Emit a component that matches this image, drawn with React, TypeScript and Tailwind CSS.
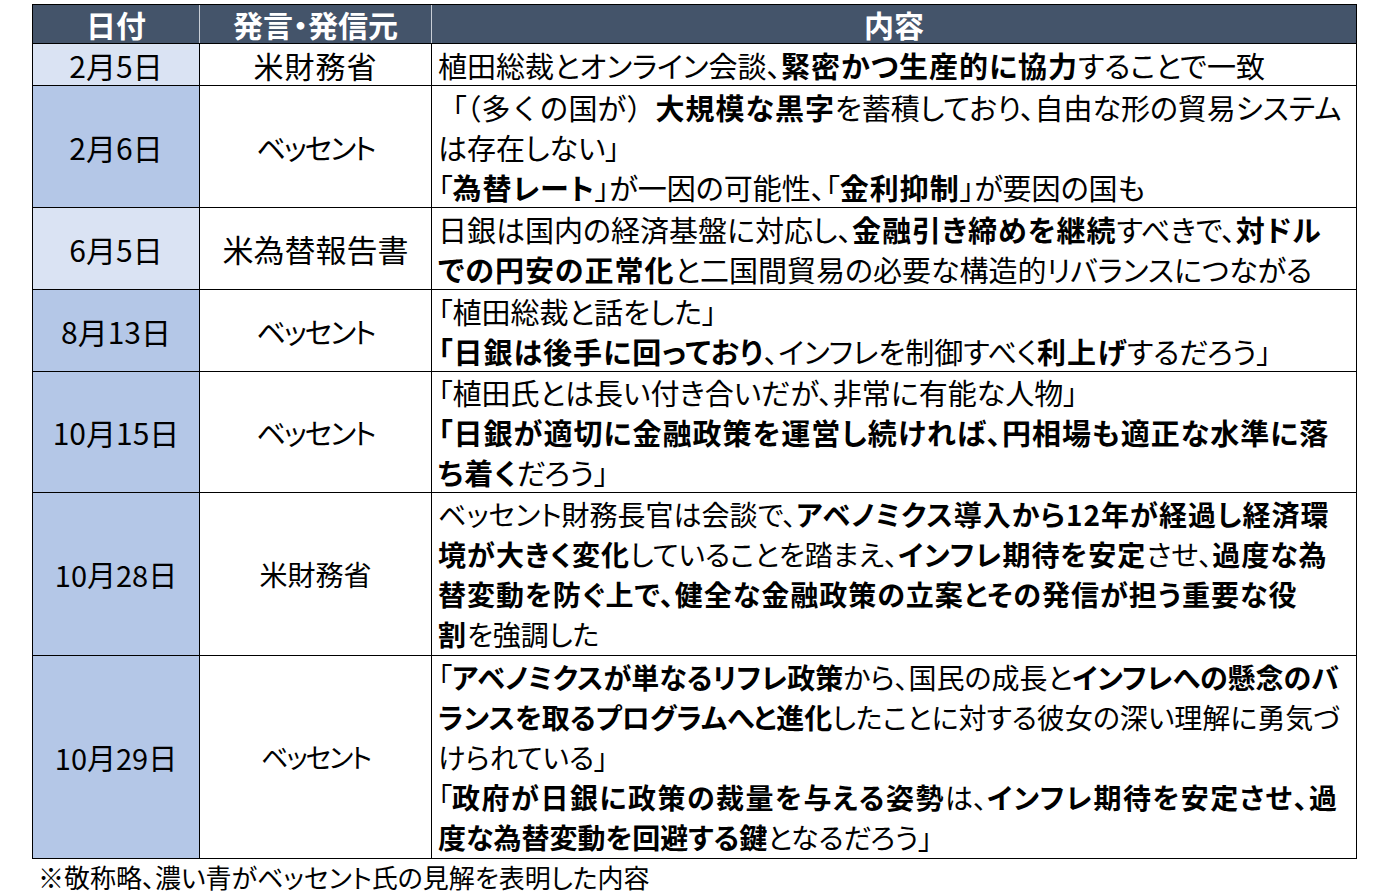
type Seg = [string, boolean?, string?];

type Row = {
  date: string;
  source: string;
  dark: boolean;
  h: string;
  dateCls: string;
  srcCls: string;
  textCls: string;
  boldCls: string;
  lines: Seg[][];
};

const rows: Row[] = [
  {
    date: "2月5日",
    source: "米財務省",
    dark: false,
    h: "h-[42px]",
    dateCls: "text-[30px]",
    srcCls: "text-[30px] tracking-[1px]",
    textCls: "text-[29px]",
    boldCls: "tracking-[1px]",
    lines: [[["植田総裁とオンライン会談、"], ["緊密かつ生産的に協力", true], ["することで一致"]]],
  },
  {
    date: "2月6日",
    source: "ベッセント",
    dark: true,
    h: "h-[122px]",
    dateCls: "text-[30px]",
    srcCls: "text-[29px] tracking-[-2px]",
    textCls: "text-[29px]",
    boldCls: "tracking-[1px]",
    lines: [
      [
        ["「（多くの国が）", false, "[font-feature-settings:normal]"],
        ["大規模な黒字", true],
        ["を蓄積しており、自由な形の貿易システム"],
      ],
      [["は存在しない」"]],
      [["「"], ["為替レート", true], ["」が一因の可能性、「"], ["金利抑制", true], ["」が要因の国も"]],
    ],
  },
  {
    date: "6月5日",
    source: "米為替報告書",
    dark: false,
    h: "h-[82px]",
    dateCls: "text-[30px]",
    srcCls: "text-[31px]",
    textCls: "text-[29px]",
    boldCls: "tracking-[1px]",
    lines: [
      [["日銀は国内の経済基盤に対応し、"], ["金融引き締めを継続", true], ["すべきで、"], ["対ドル", true]],
      [["での円安の正常化", true], ["と二国間貿易の必要な構造的リバランスにつながる"]],
    ],
  },
  {
    date: "8月13日",
    source: "ベッセント",
    dark: true,
    h: "h-[82px]",
    dateCls: "text-[30px]",
    srcCls: "text-[29px] tracking-[-2px]",
    textCls: "text-[29px]",
    boldCls: "tracking-[1px]",
    lines: [
      [["「植田総裁と話をした」"]],
      [["「日銀は後手に回っており", true], ["、インフレを制御すべく"], ["利上げ", true], ["するだろう」"]],
    ],
  },
  {
    date: "10月15日",
    source: "ベッセント",
    dark: true,
    h: "h-[121px]",
    dateCls: "text-[30px]",
    srcCls: "text-[29px] tracking-[-2px]",
    textCls: "text-[29px]",
    boldCls: "tracking-[1px]",
    lines: [
      [["「植田氏とは長い付き合いだが、非常に有能な人物」"]],
      [["「日銀が適切に金融政策を運営し続ければ、円相場も適正な水準に落", true]],
      [["ち着く", true], ["だろう」"]],
    ],
  },
  {
    date: "10月28日",
    source: "米財務省",
    dark: true,
    h: "h-[163px]",
    dateCls: "text-[29px]",
    srcCls: "text-[28px]",
    textCls: "text-[28px]",
    boldCls: "tracking-[1px]",
    lines: [
      [["ベッセント財務長官は会談で、"], ["アベノミクス導入から12年が経過し経済環", true]],
      [["境が大きく変化", true], ["していることを踏まえ、"], ["インフレ期待を安定", true], ["させ、"], ["過度な為", true]],
      [["替変動を防ぐ上で、健全な金融政策の立案とその発信が担う重要な役", true]],
      [["割", true], ["を強調した"]],
    ],
  },
  {
    date: "10月29日",
    source: "ベッセント",
    dark: true,
    h: "h-[202px]",
    dateCls: "text-[29px]",
    srcCls: "text-[27px] tracking-[-2px]",
    textCls: "text-[28px]",
    boldCls: "",
    lines: [
      [["「"], ["アベノミクスが単なるリフレ政策", true], ["から、国民の成長と"], ["インフレへの懸念のバ", true]],
      [["ランスを取るプログラムへと進化", true], ["したことに対する彼女の深い理解に勇気づ"]],
      [["けられている」"]],
      [
        ["「"],
        ["政府が日銀に政策の裁量を与える姿勢", true, "tracking-[1.5px]"],
        ["は、"],
        ["インフレ期待を安定させ、過", true, "tracking-[1.5px]"],
      ],
      [["度な為替変動を回避する鍵", true], ["となるだろう」"]],
    ],
  },
];

export default function App() {
  return (
    <div className="min-h-[895px] bg-white pl-[32px] pt-[4px] text-black font-['Noto_Sans_CJK_JP',sans-serif] [font-feature-settings:'palt']">
      <div className="w-[1325px] border border-black">
        <div className="grid h-[39px] grid-cols-[167px_232px_1fr] border-b border-black bg-[#44546a] text-[30px] font-bold leading-[36px] text-white">
          <div className="flex items-center justify-center border-r border-[#c9ced6]">日付</div>
          <div className="flex items-center justify-center border-r border-[#c9ced6]">発言・発信元</div>
          <div className="flex items-center justify-center">内容</div>
        </div>
        {rows.map((r, i) => (
          <div
            key={r.date}
            className={`grid grid-cols-[167px_232px_1fr] ${r.h} ${i < rows.length - 1 ? "border-b border-black" : ""}`}
          >
            <div
              className={`flex items-center justify-center border-r border-black leading-[36px] ${r.dark ? "bg-[#b4c7e7]" : "bg-[#dae3f3]"} ${r.dateCls}`}
            >
              {r.date}
            </div>
            <div className={`flex items-center justify-center border-r border-black leading-[36px] ${r.srcCls}`}>
              {r.source}
            </div>
            <div className={`flex flex-col justify-center pl-[6px] leading-[40px] ${r.textCls}`}>
              {r.lines.map((line, j) => (
                <div key={j} className="whitespace-nowrap">
                  {line.map(([t, b, extra], k) =>
                    b ? (
                      <span key={k} className={`font-bold ${extra ?? r.boldCls}`}>
                        {t}
                      </span>
                    ) : (
                      <span key={k} className={extra}>
                        {t}
                      </span>
                    )
                  )}
                </div>
              ))}
            </div>
          </div>
        ))}
      </div>
      <p className="pl-[6px] text-[26px] leading-[36px]">※敬称略、濃い青がベッセント氏の見解を表明した内容</p>
    </div>
  );
}
